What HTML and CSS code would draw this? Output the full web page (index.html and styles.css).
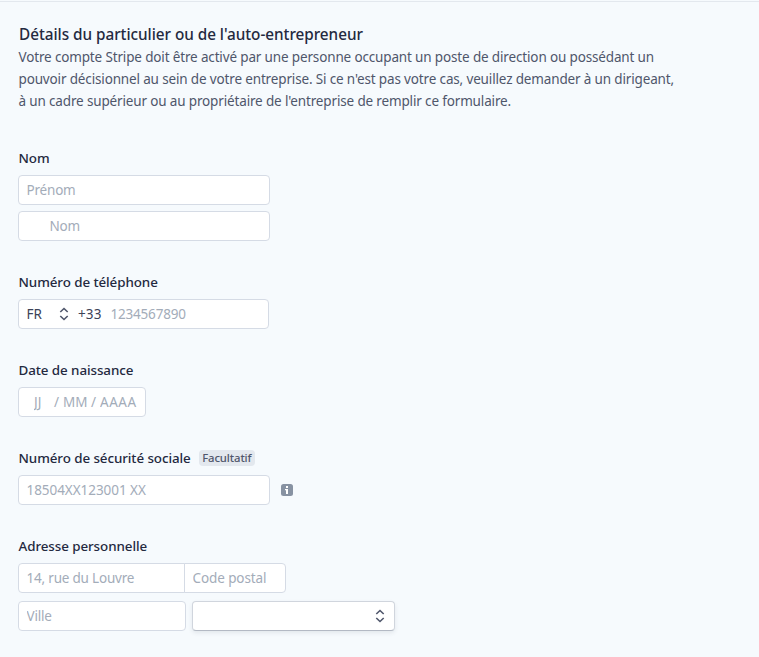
FILE: index.html
```html
<!DOCTYPE html>
<html lang="fr">
<head>
    <meta charset="UTF-8">
    <meta name="viewport" content="width=device-width, initial-scale=1.0">
    <title>Détails du particulier</title>
    <link rel="stylesheet" href="styles.css">
</head>
<body>
    <main>
        <header class="intro">
            <h1>Détails du particulier ou de l'auto-entrepreneur</h1>
            <p>
                Votre compte Stripe doit être activé par une personne occupant un poste de direction ou possédant un<br>
                pouvoir décisionnel au sein de votre entreprise. Si ce n'est pas votre cas, veuillez demander à un dirigeant,<br>
                à un cadre supérieur ou au propriétaire de l'entreprise de remplir ce formulaire.
            </p>
        </header>

        <form>
            <section class="field">
                <h2>Nom</h2>
                <div class="stack">
                    <input class="input" type="text" placeholder="Prénom">
                    <input class="input indented" type="text" placeholder="Nom">
                </div>
            </section>

            <section class="field">
                <h2>Numéro de téléphone</h2>
                <div class="input phone">
                    <span class="country">FR</span>
                    <svg class="chevrons" width="10" height="14" viewBox="0 0 10 14"><path d="M1.3 5 5 1.5 8.7 5M1.3 9 5 12.5 8.7 9"/></svg>
                    <span class="prefix">+33</span>
                    <input class="bare number" type="tel" placeholder="1234567890">
                </div>
            </section>

            <section class="field">
                <h2>Date de naissance</h2>
                <div class="input date">
                    <input class="bare day" type="text" placeholder="JJ">
                    <span>/</span>
                    <input class="bare month" type="text" placeholder="MM">
                    <span>/</span>
                    <input class="bare year" type="text" placeholder="AAAA">
                </div>
            </section>

            <section class="field">
                <h2>Numéro de sécurité sociale <span class="badge">Facultatif</span></h2>
                <div class="row">
                    <input class="input ssn" type="text" placeholder="18504XX123001 XX">
                    <svg class="info" width="12" height="12" viewBox="0 0 12 12">
                        <rect width="12" height="12" rx="2.5" fill="#8792a2"/>
                        <path d="M5 2h2v2H5zM4 5h3v5H5V6.3H4z" fill="#fff"/>
                    </svg>
                </div>
            </section>

            <section class="field">
                <h2>Adresse personnelle</h2>
                <div class="row">
                    <input class="input street" type="text" placeholder="14, rue du Louvre">
                    <input class="input zip" type="text" placeholder="Code postal">
                </div>
                <div class="row second">
                    <input class="input city" type="text" placeholder="Ville">
                    <button class="select" type="button" aria-label="Département">
                        <svg class="chevrons" width="10" height="14" viewBox="0 0 10 14"><path d="M1.3 5 5 1.5 8.7 5M1.3 9 5 12.5 8.7 9"/></svg>
                    </button>
                </div>
            </section>
        </form>
    </main>
</body>
</html>
```
FILE: styles.css
```css
* {
    margin: 0;
    padding: 0;
    box-sizing: border-box;
}

body {
    font-family: "Noto Sans", "Open Sans", sans-serif;
    font-size: 13.5px;
    background-color: #f6fafd;
    color: #4f566b;
    overflow: hidden;
}

main {
    margin-top: 1px;
    border-top: 1px solid #e3e8ee;
    padding: 21px 18px 0;
}

.intro {
    margin-bottom: 36px;
    padding-left: 0.5px;
}

h1 {
    margin-bottom: 1px;
    padding-left: 0.5px;
    font-size: 15.3px;
    font-weight: 500;
    line-height: 22px;
    letter-spacing: -0.03px;
    color: #24293f;
}

.intro p {
    line-height: 22px;
    letter-spacing: -0.15px;
    white-space: nowrap;
}

h2 {
    display: flex;
    align-items: center;
    height: 20px;
    margin-bottom: 7px;
    padding-left: 0.5px;
    font-size: 13.4px;
    font-weight: 500;
    letter-spacing: -0.08px;
    color: #24293f;
}

.field {
    margin-bottom: 31px;
}

.stack {
    display: flex;
    flex-direction: column;
    gap: 6px;
}

.row {
    display: flex;
    align-items: center;
}

.second {
    margin-top: 8px;
    gap: 6px;
}

.input {
    display: flex;
    align-items: center;
    width: 252px;
    height: 30px;
    padding: 0 7.5px;
    background-color: #fff;
    border: 1px solid #d5dbe5;
    border-radius: 4px;
    font: inherit;
    letter-spacing: -0.2px;
    color: #3c4257;
}

input::placeholder {
    color: #a3acb9;
    opacity: 1;
}

.bare {
    border: none;
    background: none;
    font: inherit;
    letter-spacing: inherit;
    min-width: 0;
}

.indented {
    padding-left: 30.5px;
}

.phone {
    width: 251px;
}

.country {
    width: 32.5px;
    letter-spacing: 0;
}

.chevrons {
    fill: none;
    stroke: #4f566b;
    stroke-width: 1.6;
}

.prefix {
    width: 32.5px;
    margin-left: 9px;
    letter-spacing: 0.1px;
}

.number {
    flex: 1;
}

.date {
    width: 128px;
    padding: 0;
    color: #a3acb9;
    letter-spacing: 0;
}

.day {
    width: 20px;
    margin-left: 15px;
}

.month {
    width: 28px;
    margin-left: 4px;
}

.year {
    width: 42px;
    margin-left: 4px;
    letter-spacing: 0.5px;
}

.badge {
    margin-left: 8px;
    padding: 0 3.5px;
    border-radius: 4px;
    background-color: #e3e8ee;
    color: #4f566b;
    font-size: 11.3px;
    line-height: 16px;
    letter-spacing: -0.1px;
}

.ssn {
    letter-spacing: -0.05px;
}

.info {
    margin-left: 11px;
}

.street {
    width: 167px;
    border-radius: 4px 0 0 4px;
}

.zip {
    width: 102px;
    margin-left: -1px;
    border-radius: 0 4px 4px 0;
    letter-spacing: -0.1px;
}

.city {
    width: 168px;
}

.select {
    display: flex;
    align-items: center;
    justify-content: flex-end;
    width: 203px;
    height: 30px;
    padding-right: 9px;
    background-color: #fff;
    border: 1px solid #d0d5dd;
    border-bottom-color: #b3b9c4;
    border-radius: 4px;
    box-shadow: 0 2px 4px rgba(60, 66, 87, 0.1);
}
```
